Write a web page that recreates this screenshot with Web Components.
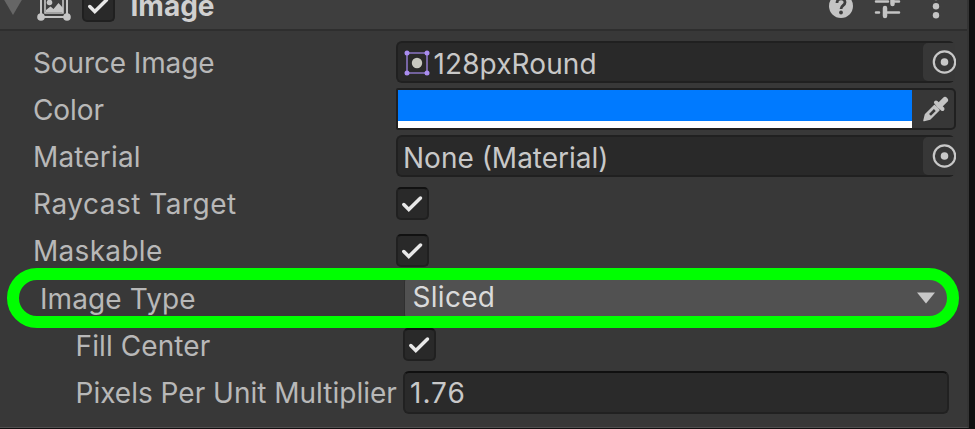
<!DOCTYPE html>
<html lang="en">
<head>
<meta charset="utf-8">
<title>Image</title>
<style>
  body { margin: 0; background: #101010; overflow: hidden; }
</style>
</head>
<body>
<inspector-panel>
  <component-header slot="header" label="Image"></component-header>
  <property-row label="Source Image" spacing="-0.12">
    <object-field sprite>128pxRound</object-field>
  </property-row>
  <property-row label="Color" spacing="-0.1"><color-field></color-field></property-row>
  <property-row label="Material" spacing="0.15">
    <object-field>None (Material)</object-field>
  </property-row>
  <property-row label="Raycast Target" spacing="0.5"><check-box></check-box></property-row>
  <property-row label="Maskable" spacing="0.3"><check-box></check-box></property-row>
  <property-row label="Image Type" spacing="0.1" class="type" highlight><drop-down>Sliced</drop-down></property-row>
  <property-row label="Fill Center" spacing="0.1" class="sub"><check-box></check-box></property-row>
  <property-row label="Pixels Per Unit Multiplier" spacing="0" class="sub"><number-field>1.76</number-field></property-row>
</inspector-panel>

<script>
function define(name, html, setup) {
  const template = document.createElement('template');
  template.innerHTML = html;
  customElements.define(name, class extends HTMLElement {
    connectedCallback() {
      if (this.shadowRoot) return;
      this.attachShadow({ mode: 'open' });
      this.shadowRoot.appendChild(template.content.cloneNode(true));
      if (setup) setup(this, this.shadowRoot);
    }
  });
}

define('inspector-panel', `
  <style>
    :host {
      display: block; box-sizing: border-box; width: 969px; height: 428px;
      background: #383838; color: #b8b8b8;
      border-right: 2px solid #343434; border-bottom: 1px solid #505050;
      font: 28px/34px Inter, sans-serif;
    }
    .rows { display: grid; grid-auto-rows: 47.2px; padding-top: 7.1px; }
    .rows ::slotted(.type) { --label-x: 40px; --field-x: 404px; --field-end: 949px; }
    .rows ::slotted(.sub) { --label-x: 75.5px; --field-x: 403px; --field-end: 950px; }
  </style>
  <slot name="header"></slot>
  <div class="rows"><slot></slot></div>
`);

define('component-header', `
  <style>
    :host {
      display: flex; align-items: center; box-sizing: border-box; height: 31px;
      background: #3e3e3e; border-bottom: 2px solid #2e2e2e; overflow: hidden;
    }
    svg { display: block; flex: none; }
    /* the bar is scrolled partly out of view */
    .bar { display: flex; align-items: center; width: 100%; height: 46px; margin-top: -18px; flex: none; }
    .fold { margin-left: 3px; }
    .icon { margin-left: 13px; }
    check-box { margin-left: 10px; }
    .title { margin-left: 15.5px; flex: 1; font-weight: 700; color: #d0d0d0; }
    .tools { display: flex; align-items: center; gap: 20px; padding-right: 18.5px; padding-top: 2px; }
    .more { margin-left: -3px; }
  </style>
  <div class="bar">
    <svg class="fold" width="20" height="26" viewBox="0 0 20 26"><path d="M0 5H20L10 22Z" fill="#666"/></svg>
    <svg class="icon" width="36" height="40" viewBox="0 0 36 40" fill="#c4c4c4">
      <path d="M5 3V31M31 3V31M5 31H31M5 3H31" stroke="#c4c4c4" stroke-width="2"/>
      <circle cx="5" cy="31" r="3.800"/><circle cx="31" cy="31" r="3.800"/>
      <path d="M9 8H27V27H9Z" fill="none" stroke="#c4c4c4" stroke-width="1.600"/>
      <circle cx="13.500" cy="16.500" r="2.800"/>
      <path d="M10 26V24L14.500 20.500L17.500 23L22.500 17L27 22V26Z"/>
    </svg>
    <check-box></check-box>
    <span class="title"></span>
    <div class="tools">
      <svg width="26" height="36" viewBox="0 0 26 36">
        <circle cx="13" cy="17" r="12" fill="#c4c4c4"/>
        <path d="M9 14C9 8.500 17 8.500 17 13.500C17 16.500 13 16.300 13 20" fill="none" stroke="#3e3e3e" stroke-width="2.800"/>
        <circle cx="13" cy="23.500" r="1.900" fill="#3e3e3e"/>
      </svg>
      <svg width="28" height="36" viewBox="0 0 28 36" fill="none" stroke="#c4c4c4" stroke-linecap="round">
        <path d="M2 12.500H14M21 12.500H25M2 23.500H5M12 23.500H25" stroke-width="2.500"/>
        <path d="M18.500 8V15M11 19V27" stroke-width="4.500"/>
      </svg>
      <svg class="more" width="30" height="36" viewBox="0 0 30 36" fill="#c4c4c4">
        <circle cx="17" cy="8" r="3.200"/><circle cx="17" cy="17.300" r="3.200"/><circle cx="17" cy="26.300" r="3.200"/>
      </svg>
    </div>
  </div>
`, (host, root) => {
  root.querySelector('.title').textContent = host.getAttribute('label');
});

define('property-row', `
  <style>
    :host {
      display: grid; position: relative; align-items: center;
      grid-template-columns: var(--field-x, 396px) calc(var(--field-end, 956px) - var(--field-x, 396px));
    }
    .label { padding-left: var(--label-x, 33px); white-space: nowrap; padding-top: 2px; }
    .ring { display: none; }
    :host([highlight]) .ring {
      display: block; position: absolute; left: 7px; top: -6.100px; z-index: 1;
      box-sizing: border-box; width: 952px; height: 60.500px;
      border: 12px solid #00ff01; border-radius: 31px;
    }
  </style>
  <span class="label"></span>
  <slot></slot>
  <div class="ring"></div>
`, (host, root) => {
  const label = root.querySelector('.label');
  label.textContent = host.getAttribute('label');
  label.style.letterSpacing = `${host.getAttribute('spacing') || 0}px`;
});

define('object-field', `
  <style>
    :host {
      display: flex; align-items: center; box-sizing: border-box; height: 42px; width: 559px;
      background: #292929; border: 2px solid #202020; border-right: 0; border-radius: 6px;
      color: #c8c8c8; padding-left: 5px;
    }
    .sprite { display: none; margin: 2px 3.5px 0 1px; flex: none; }
    :host([sprite]) .sprite { display: block; }
    :host([sprite]) .text { letter-spacing: 0.1px; padding-top: 4px; }
    .text { flex: 1; padding-top: 3px; }
    .pick { display: flex; align-items: center; justify-content: flex-end; width: 32px; height: 38px; background: #373737; border-radius: 5px 0 0 5px; }
    .pick svg { flex: none; margin-right: -1px; }
  </style>
  <svg class="sprite" width="26" height="26" viewBox="0 0 26 26">
    <path d="M3 3H23V23H3Z" fill="none" stroke="#8b75c4" stroke-width="1.600"/>
    <g fill="#aa8df0"><circle cx="3" cy="3" r="2.500"/><circle cx="23" cy="3" r="2.500"/><circle cx="3" cy="23" r="2.500"/><circle cx="23" cy="23" r="2.500"/></g>
    <circle cx="13" cy="13" r="5.200" fill="#c8c8c0"/>
  </svg>
  <span class="text"><slot></slot></span>
  <span class="pick">
    <svg width="26" height="26" viewBox="0 0 26 26">
      <circle cx="14.500" cy="13" r="10.700" fill="none" stroke="#c8c8c8" stroke-width="2.200"/>
      <circle cx="14.500" cy="13" r="3.800" fill="#c8c8c8"/>
    </svg>
  </span>
`);

define('color-field', `
  <style>
    :host { display: flex; box-sizing: border-box; height: 42px; border: 2px solid #202020; border-radius: 2px 5px 5px 2px; background: #373737; }
    .swatch { width: 514px; box-sizing: border-box; background: #007aff; border-bottom: 7px solid #fff; }
    .pick { flex: 1; display: flex; align-items: center; justify-content: center; padding-left: 6px; }
  </style>
  <div class="swatch"></div>
  <div class="pick">
    <svg width="30" height="30" viewBox="0 0 30 30">
      <path d="M3 26.500L4.500 20.500L13.500 11.500L18 16L9 25Z" fill="#c4c4c4" stroke="#c4c4c4" stroke-width="1.500" stroke-linejoin="round"/>
      <path d="M9 20.800L13.800 16" stroke="#373737" stroke-width="2.600"/>
      <path d="M15 8.500L21.500 15" stroke="#c4c4c4" stroke-width="4" stroke-linecap="round"/>
      <path d="M18.500 11.500L24 6" stroke="#c4c4c4" stroke-width="6" stroke-linecap="round"/>
    </svg>
  </div>
`);

define('check-box', `
  <style>
    :host { display: block; box-sizing: border-box; width: 33px; height: 33px; background: #292929; border: 2px solid #202020; border-top-color: #111; border-radius: 5px; }
    svg { display: block; }
  </style>
  <svg width="29" height="29" viewBox="0 0 29 29">
    <path d="M5.800 15.500L10.800 20.500L22.500 9" fill="none" stroke="#e8e8e8" stroke-width="3.500" stroke-linecap="round"/>
  </svg>
`);

define('drop-down', `
  <style>
    :host { display: flex; align-items: center; justify-content: space-between; box-sizing: border-box; height: 40px; padding: 0 14px 0 7.5px; background: #515151; border-radius: 4px; border-left: 1px solid #303030; color: #dadada; letter-spacing: 0.3px; }
    .value { padding-bottom: 1px; }
  </style>
  <span class="value"><slot></slot></span>
  <svg width="18" height="12" viewBox="0 0 18 12"><path d="M0 0.500H18L9 11.500Z" fill="#c8c8c8"/></svg>
`);

define('number-field', `
  <style>
    :host { display: flex; align-items: center; box-sizing: border-box; height: 43px; width: 546px; padding: 2px 0 0 5px; background: #2a2a2a; border: 2px solid #212121; border-top-color: #101010; border-radius: 6px; color: #c8c8c8; letter-spacing: 1px; }
  </style>
  <slot></slot>
`);
</script>
</body>
</html>
